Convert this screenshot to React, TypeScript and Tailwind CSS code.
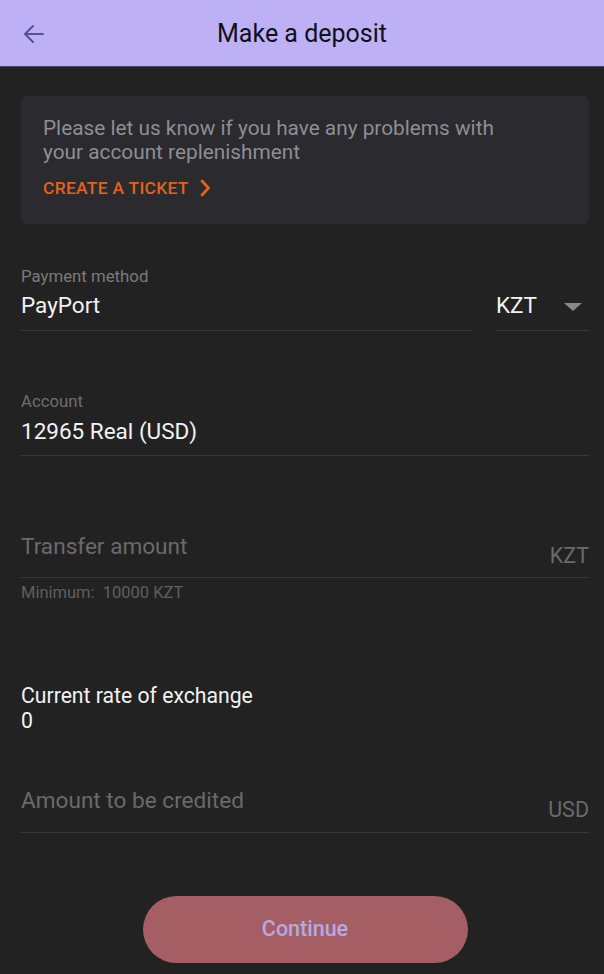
import React from "react";

export default function App() {
  return (
    <div
      className="w-[604px] h-[974px] bg-[#222222] overflow-hidden flex flex-col"
      style={{ fontFamily: "Roboto, 'Noto Sans', sans-serif" }}
    >
      <header className="h-[67px] shrink-0 bg-[#bdb0f5] border-b border-[#4b4466] relative flex items-center justify-center">
        <svg
          className="absolute left-[22px] top-[22px]"
          width="24"
          height="24"
          viewBox="0 0 24 24"
          fill="none"
          stroke="#55509a"
          strokeWidth="2"
          strokeLinecap="round"
          strokeLinejoin="round"
        >
          <path d="M21 12H3.5M11 4l-8 8 8 8" />
        </svg>
        <h1 className="text-[25px] text-[#111018] leading-none">Make a deposit</h1>
      </header>

      <main className="pl-[21px] pr-[15px] flex flex-col">
        <div className="mt-[29px] rounded-[5px] bg-[#2a2a2f] pl-[22px] pr-[20px] pt-[20px] pb-[26px]">
          <p className="text-[20.8px] leading-[24px] text-[#8e8e94]">
            Please let us know if you have any problems with
            <br />
            your account replenishment
          </p>
          <div className="mt-[14px] flex items-center gap-[10px] text-[#e2621b] text-[17.4px] leading-[20px] font-medium tracking-[0.3px]">
            <span>CREATE A TICKET</span>
            <svg width="12" height="18" viewBox="0 0 12 18" fill="none" stroke="#e2621b" strokeWidth="2.8" strokeLinecap="round" strokeLinejoin="round">
              <path d="M3 2l6.5 7L3 16" />
            </svg>
          </div>
        </div>

        <div className="mt-[42px] flex gap-[22px]">
          <div className="flex-1 border-b border-[#3a3a3a] pb-[12px]">
            <div className="text-[16.8px] leading-[20px] text-[#7b7b7b]">Payment method</div>
            <div className="mt-[6px] text-[22.5px] leading-[26px] text-[#f2f2f2]">PayPort</div>
          </div>
          <div className="w-[94px] border-b border-[#3a3a3a] pb-[12px] flex items-end">
            <div className="flex items-center w-full justify-between">
              <span className="text-[22.5px] leading-[26px] text-[#f2f2f2] pl-[1px]">KZT</span>
              <svg width="20" height="10" viewBox="0 0 20 10" className="mr-[6px] mt-[4px]">
                <path d="M1 1h18l-9 8z" fill="#8a8a8a" />
              </svg>
            </div>
          </div>
        </div>

        <div className="mt-[60px] border-b border-[#3a3a3a] pb-[11px]">
          <div className="text-[16.8px] leading-[20px] text-[#6e6e6e]">Account</div>
          <div className="mt-[7px] text-[22.5px] leading-[26px] text-[#f2f2f2]">12965 Real (USD)</div>
        </div>

        <div className="mt-[78px] border-b border-[#3a3a3a] pb-[8px] flex items-start justify-between">
          <span className="text-[22.6px] leading-[26px] text-[#6a6a6a]">Transfer amount</span>
          <span className="mt-[9px] text-[21.5px] leading-[26px] text-[#6a6a6a]">KZT</span>
        </div>
        <div className="mt-[6px] text-[16.5px] leading-[18px] text-[#5f5f5f]">Minimum:&nbsp; 10000 KZT</div>

        <div className="mt-[81px] text-[21.2px] leading-[25px] text-[#f2f2f2]">
          Current rate of exchange
          <br />0
        </div>

        <div className="mt-[55px] border-b border-[#3a3a3a] pb-[9px] flex items-start justify-between">
          <span className="text-[22.6px] leading-[26px] text-[#6a6a6a]">Amount to be credited</span>
          <span className="mt-[9px] text-[21.5px] leading-[26px] text-[#6a6a6a]">USD</span>
        </div>

        <div className="mt-[63px] flex justify-center">
          <button className="w-[325px] h-[67px] rounded-full bg-[#a55f64] text-[#b4a9e6] text-[21.5px] font-medium">
            Continue
          </button>
        </div>
      </main>
    </div>
  );
}
